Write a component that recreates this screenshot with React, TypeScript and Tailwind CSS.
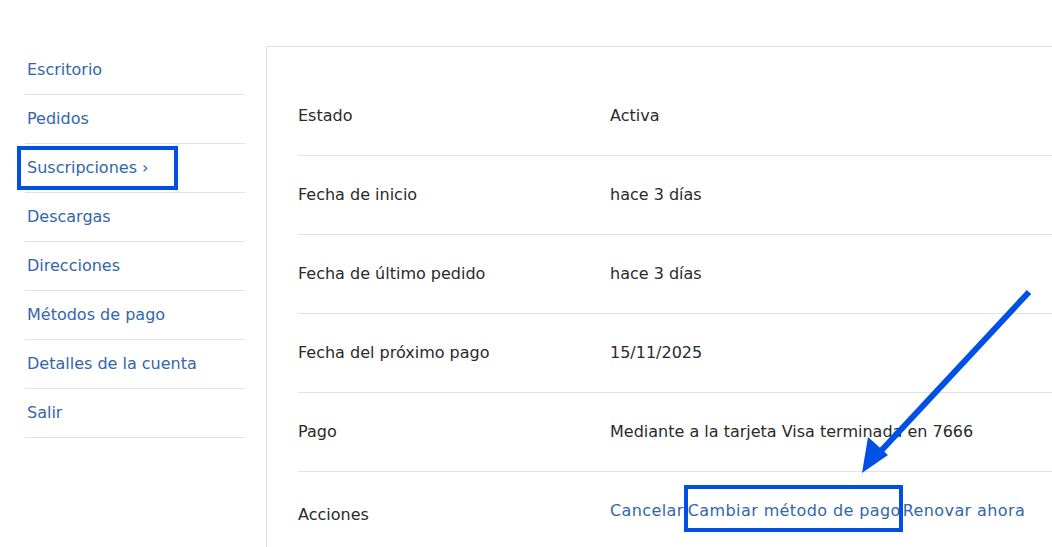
const navItems = [
  "Escritorio",
  "Pedidos",
  "Suscripciones",
  "Descargas",
  "Direcciones",
  "Métodos de pago",
  "Detalles de la cuenta",
  "Salir",
];

const rows = [
  { label: "Estado", value: "Activa" },
  { label: "Fecha de inicio", value: "hace 3 días" },
  { label: "Fecha de último pedido", value: "hace 3 días" },
  { label: "Fecha del próximo pago", value: "15/11/2025" },
  { label: "Pago", value: "Mediante a la tarjeta Visa terminada en 7666" },
];

export default function App() {
  return (
    <div
      className="relative w-[1052px] h-[547px] overflow-hidden bg-white text-[16px] text-[#2a2a2a]"
      style={{ fontFamily: '"DejaVu Sans", "Open Sans", sans-serif' }}
    >
      <div className="flex pt-[46px]">
        {/* menú lateral */}
        <nav className="w-[220px] ml-[25px] shrink-0">
          {navItems.map((item) => (
            <div
              key={item}
              className="h-[49px] border-b border-[#e2e2e2] flex items-center pl-[2px]"
            >
              {item === "Suscripciones" ? (
                <span className="relative text-[#3366aa]">
                  {item} ›
                  <span className="absolute -left-[10px] -right-[30px] -top-[10px] -bottom-[10px] border-4 border-[#0050e6]" />
                </span>
              ) : (
                <span className="text-[#3366aa]">{item}</span>
              )}
            </div>
          ))}
        </nav>

        {/* detalle de suscripción */}
        <div className="ml-[21px] border-l border-t border-[#e2e2e2] pt-[30px] pl-[31px] h-[520px] flex-1">
          {rows.map((r) => (
            <div key={r.label} className="flex items-center h-[79px] border-b border-[#e2e2e2]">
              <div className="w-[312px]">{r.label}</div>
              <div>{r.value}</div>
            </div>
          ))}
          <div className="flex items-center h-[79px]">
            <div className="w-[312px] pt-[7px]">Acciones</div>
            <div className="flex text-[#3366aa] -mt-[1px] tracking-[0.4px]">
              <span>Cancelar</span>
              <span className="relative ml-[4px]">
                Cambiar método de pago
                <span className="absolute -left-[4px] -right-[2px] -top-[14px] -bottom-[9px] border-4 border-[#0050e6]" />
              </span>
              <span className="ml-[2px]">Renovar ahora</span>
            </div>
          </div>
        </div>
      </div>

      {/* flecha de anotación */}
      <svg className="absolute left-0 top-0 pointer-events-none" width="1052" height="547">
        <line x1="1029" y1="292" x2="880" y2="452" stroke="#0050e6" strokeWidth="6" />
        <polygon points="862,473 868,437 888,455" fill="#0050e6" />
      </svg>
    </div>
  );
}
